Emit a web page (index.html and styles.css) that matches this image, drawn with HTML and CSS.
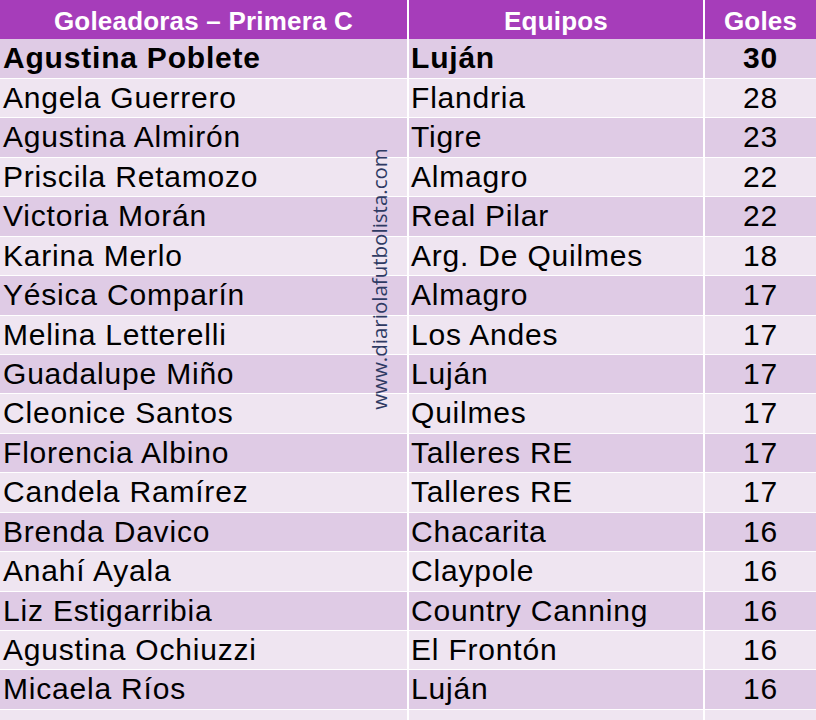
FILE: index.html
```html
<!DOCTYPE html>
<html lang="es">
<head>
<meta charset="utf-8">
<title>Goleadoras – Primera C</title>
<link rel="stylesheet" href="styles.css">
</head>
<body>
<div class="sheet">
  <div class="table">
    <div class="cell head">Goleadoras – Primera C</div>
    <div class="cell head">Equipos</div>
    <div class="cell head">Goles</div>

    <div class="cell dark name top">Agustina Poblete</div>
    <div class="cell dark team top">Luján</div>
    <div class="cell dark goals top">30</div>

    <div class="cell light name">Angela Guerrero</div>
    <div class="cell light team">Flandria</div>
    <div class="cell light goals">28</div>

    <div class="cell dark name">Agustina Almirón</div>
    <div class="cell dark team">Tigre</div>
    <div class="cell dark goals">23</div>

    <div class="cell light name">Priscila Retamozo</div>
    <div class="cell light team">Almagro</div>
    <div class="cell light goals">22</div>

    <div class="cell dark name">Victoria Morán</div>
    <div class="cell dark team">Real Pilar</div>
    <div class="cell dark goals">22</div>

    <div class="cell light name">Karina Merlo</div>
    <div class="cell light team">Arg. De Quilmes</div>
    <div class="cell light goals">18</div>

    <div class="cell dark name">Yésica Comparín</div>
    <div class="cell dark team">Almagro</div>
    <div class="cell dark goals">17</div>

    <div class="cell light name">Melina Letterelli</div>
    <div class="cell light team">Los Andes</div>
    <div class="cell light goals">17</div>

    <div class="cell dark name">Guadalupe Miño</div>
    <div class="cell dark team">Luján</div>
    <div class="cell dark goals">17</div>

    <div class="cell light name">Cleonice Santos</div>
    <div class="cell light team">Quilmes</div>
    <div class="cell light goals">17</div>

    <div class="cell dark name">Florencia Albino</div>
    <div class="cell dark team">Talleres RE</div>
    <div class="cell dark goals">17</div>

    <div class="cell light name">Candela Ramírez</div>
    <div class="cell light team">Talleres RE</div>
    <div class="cell light goals">17</div>

    <div class="cell dark name">Brenda Davico</div>
    <div class="cell dark team">Chacarita</div>
    <div class="cell dark goals">16</div>

    <div class="cell light name">Anahí Ayala</div>
    <div class="cell light team">Claypole</div>
    <div class="cell light goals">16</div>

    <div class="cell dark name">Liz Estigarribia</div>
    <div class="cell dark team">Country Canning</div>
    <div class="cell dark goals">16</div>

    <div class="cell light name">Agustina Ochiuzzi</div>
    <div class="cell light team">El Frontón</div>
    <div class="cell light goals">16</div>

    <div class="cell dark name">Micaela Ríos</div>
    <div class="cell dark team">Luján</div>
    <div class="cell dark goals">16</div>

    <div class="cell light name"></div>
    <div class="cell light team"></div>
    <div class="cell light goals"></div>
  </div>
  <div class="watermark">www.diariolafutbolista.com</div>
</div>
</body>
</html>
```

FILE: styles.css
```css
html, body {
  margin: 0;
  padding: 0;
  background: #ffffff;
}

.sheet {
  position: relative;
  width: 816px;
  height: 720px;
  overflow: hidden;
  background: #ffffff;
}

.table {
  display: grid;
  grid-template-columns: 407px 294px 111px;
  grid-auto-rows: 38.44px;
  column-gap: 2px;
  row-gap: 1px;
  background: #ffffff;
  font-family: "Liberation Sans", Arial, sans-serif;
  color: #000000;
}

.cell {
  font-size: 30px;
  line-height: 38.44px;
  letter-spacing: 0.8px;
  white-space: nowrap;
  overflow: hidden;
}

.head {
  height: 39px;
  margin-bottom: 3px;
  align-self: start;
  background: #a63dba;
  color: #ffffff;
  font-weight: bold;
  font-size: 26px;
  letter-spacing: 0.2px;
  line-height: 36px;
  padding-top: 3px;
  box-sizing: border-box;
  text-align: center;
}

.dark {
  background: #dfcbe5;
}

.light {
  background: #efe5f1;
}

.name {
  padding-left: 3px;
}

.team {
  padding-left: 2px;
}

.goals {
  text-align: center;
}

.top {
  font-weight: bold;
}

.watermark {
  position: absolute;
  left: 379px;
  top: 279px;
  transform: translate(-50%, -50%) rotate(-90deg);
  font-family: "Open Sans", "Noto Sans", sans-serif;
  font-size: 20.5px;
  color: #2e3a63;
  white-space: nowrap;
}
```
